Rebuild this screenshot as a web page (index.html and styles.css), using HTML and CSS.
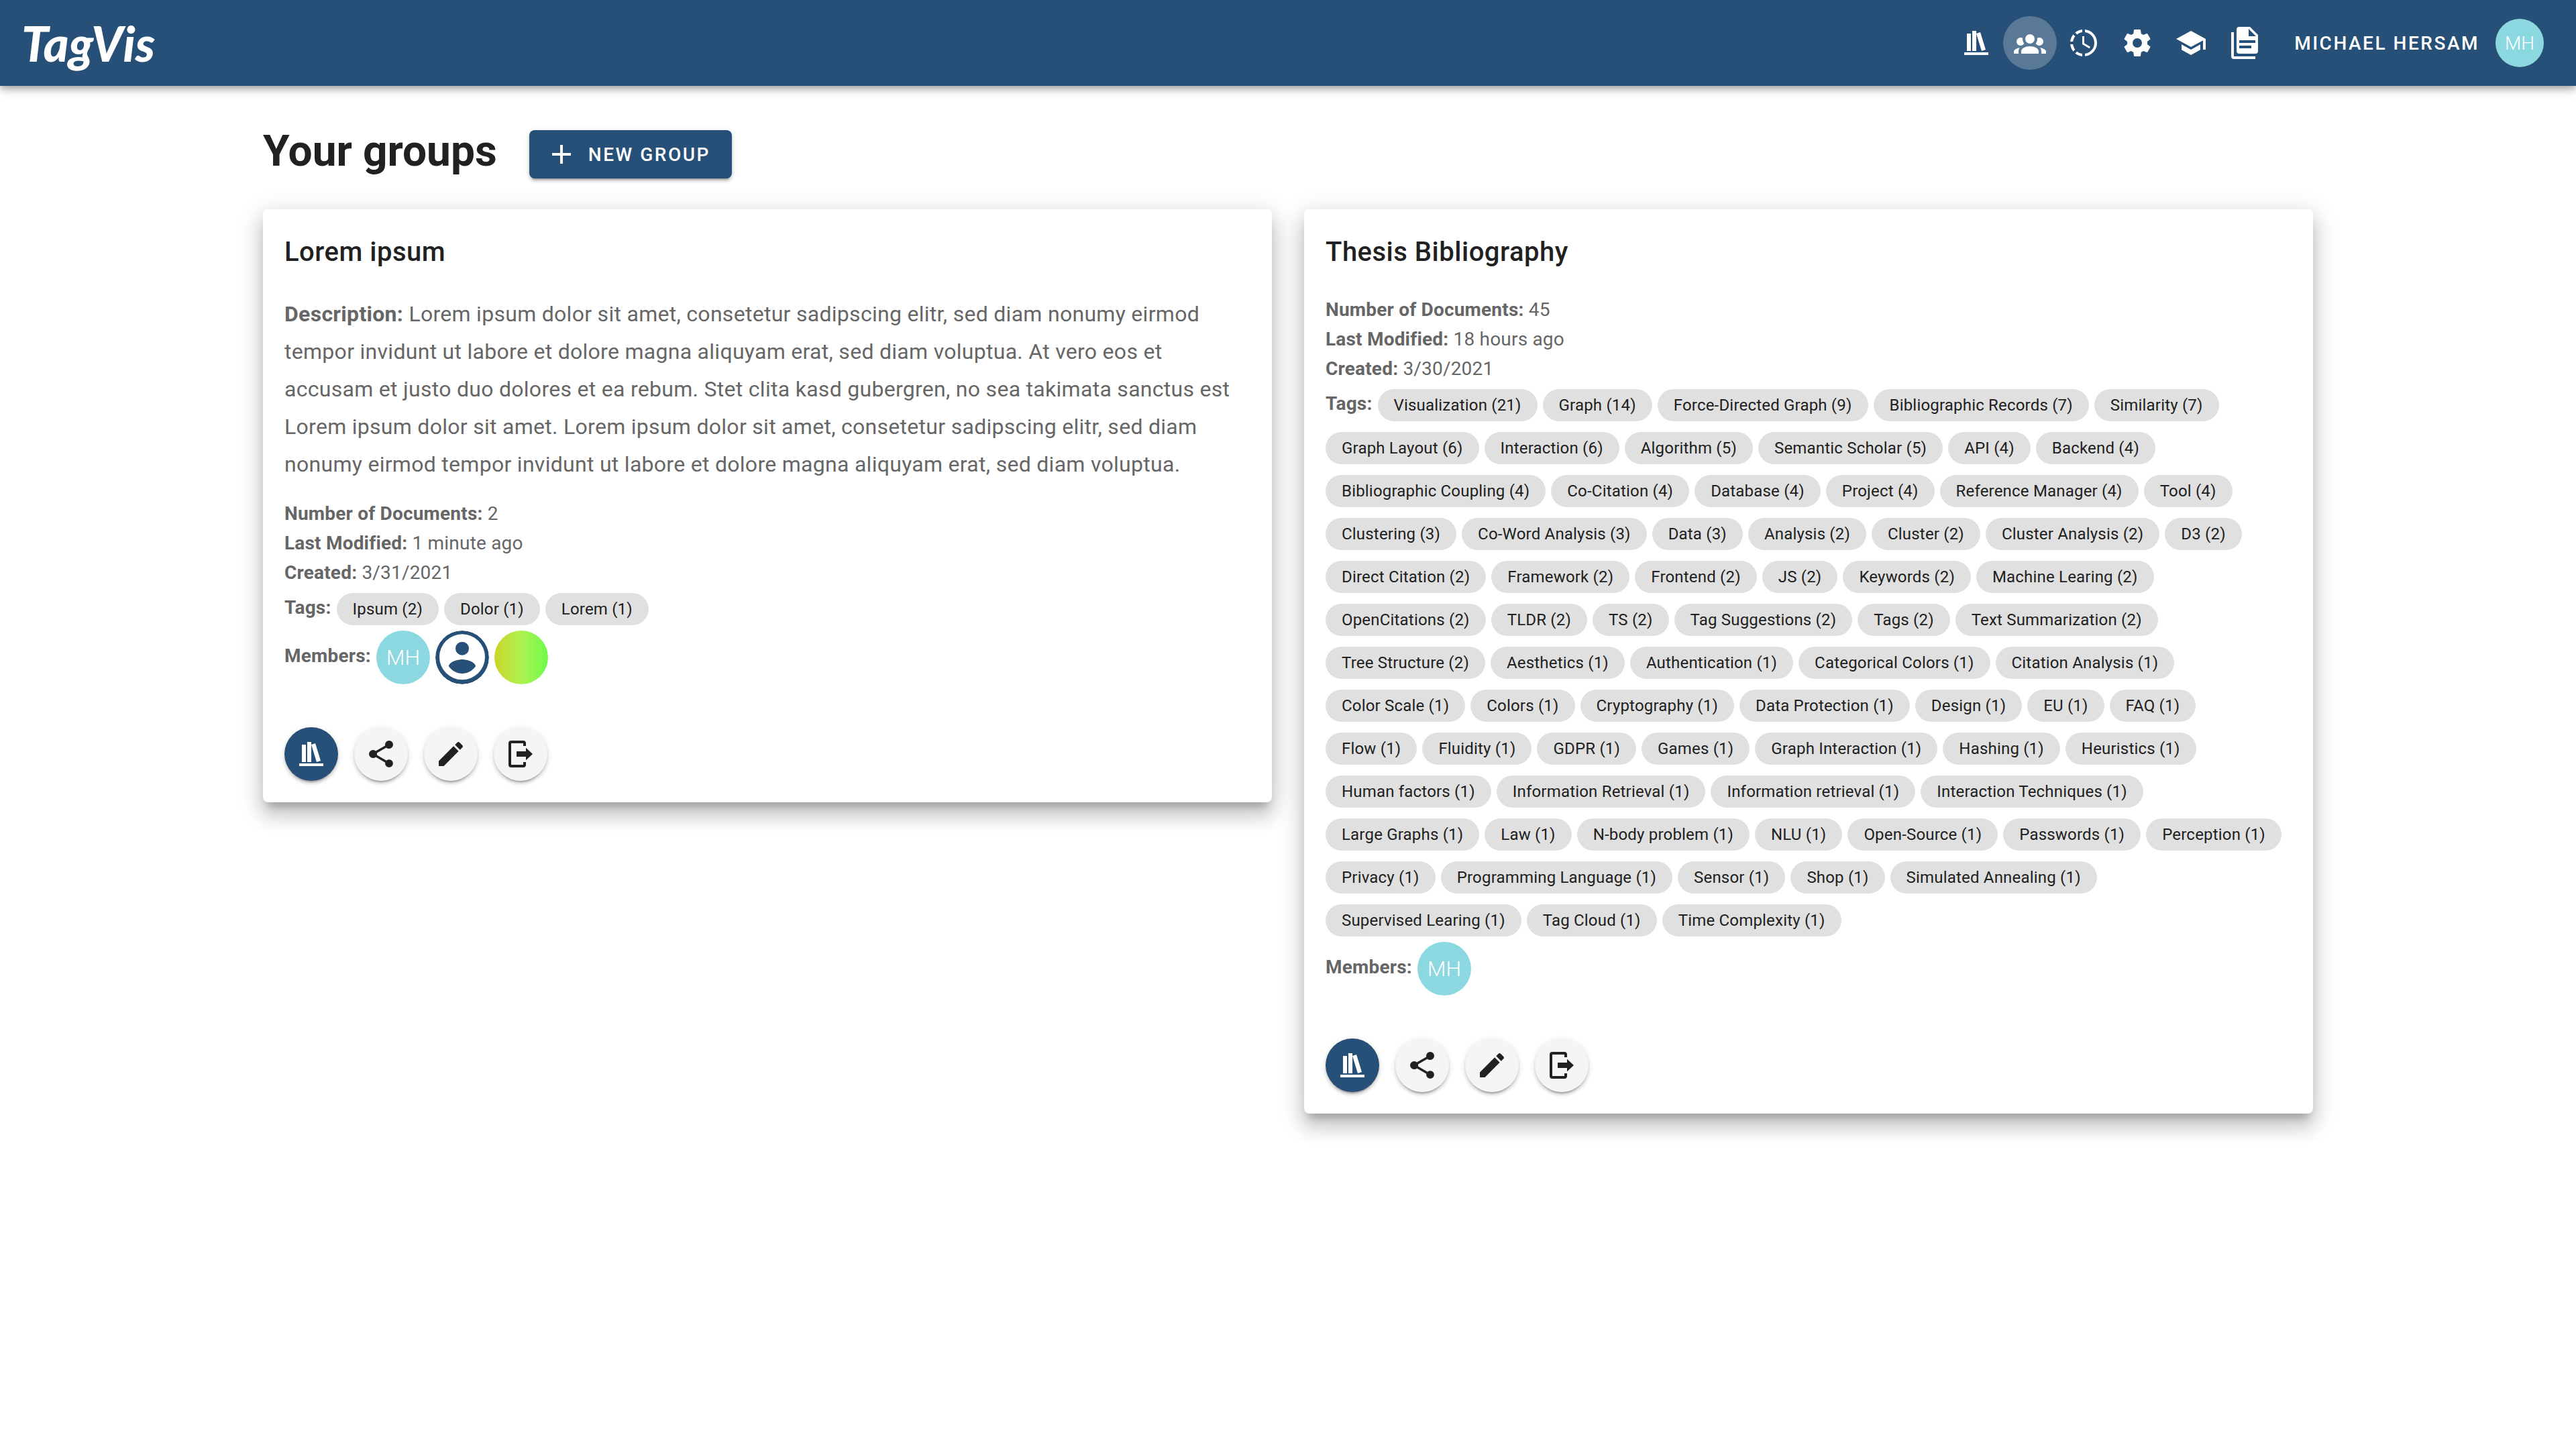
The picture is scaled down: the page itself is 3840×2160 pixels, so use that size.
FILE: index.html
```html
<!DOCTYPE html>
<html lang="en">
<head>
<meta charset="utf-8">
<title>TagVis – Your groups</title>
<meta name="viewport" content="width=device-width, initial-scale=1">
<link rel="stylesheet" href="styles.css">
</head>
<body>
<svg class="sprite" aria-hidden="true">
  <symbol id="i-books" viewBox="0 0 24 24"><path d="M9 3V18H12V3H9M12 5L16 18L19 17L15 4L12 5M5 5V18H8V5H5M3 19V21H21V19H3Z"/></symbol>
  <symbol id="i-group" viewBox="0 0 24 24"><path d="M12,5.5A3.5,3.5 0 0,1 15.5,9A3.5,3.5 0 0,1 12,12.5A3.5,3.5 0 0,1 8.5,9A3.5,3.5 0 0,1 12,5.5M5,8C5.56,8 6.08,8.15 6.53,8.42C6.38,9.85 6.8,11.27 7.66,12.38C7.16,13.34 6.16,14 5,14A3,3 0 0,1 2,11A3,3 0 0,1 5,8M19,8A3,3 0 0,1 22,11A3,3 0 0,1 19,14C17.84,14 16.84,13.34 16.34,12.38C17.2,11.27 17.62,9.85 17.47,8.42C17.92,8.15 18.44,8 19,8M5.5,18.25C5.5,16.18 8.41,14.5 12,14.5C15.59,14.5 18.5,16.18 18.5,18.25V20H5.5V18.25M0,20V18.5C0,17.11 1.89,15.94 4.45,15.6C3.86,16.28 3.5,17.22 3.5,18.25V20H0M24,20H20.5V18.25C20.5,17.22 20.14,16.28 19.55,15.6C22.11,15.94 24,17.11 24,18.5V20Z"/></symbol>
  <symbol id="i-clock" viewBox="0 0 24 24"><path d="M13,2.03V2.05L13,4.05C17.39,4.59 20.5,8.58 19.96,12.97C19.5,16.61 16.64,19.5 13,19.93V21.93C18.5,21.38 22.5,16.5 21.95,11C21.5,6.25 17.73,2.5 13,2.03M11,2.06C9.05,2.25 7.19,3 5.67,4.26L7.1,5.74C8.22,4.84 9.57,4.26 11,4.06V2.06M4.26,5.67C3,7.19 2.25,9.04 2.05,11H4.05C4.24,9.58 4.8,8.23 5.69,7.1L4.26,5.67M2.06,13C2.26,14.96 3.03,16.81 4.27,18.33L5.69,16.9C4.81,15.77 4.24,14.42 4.06,13H2.06M7.1,18.37L5.67,19.74C7.18,21 9.04,21.79 11,22V20C9.58,19.82 8.23,19.25 7.1,18.37M12.5,7V12.25L17,14.92L16.25,16.15L11,13V7H12.5Z"/></symbol>
  <symbol id="i-cog" viewBox="0 0 24 24"><path d="M12,15.5A3.5,3.5 0 0,1 8.5,12A3.5,3.5 0 0,1 12,8.5A3.5,3.5 0 0,1 15.5,12A3.5,3.5 0 0,1 12,15.5M19.43,12.97C19.47,12.65 19.5,12.33 19.5,12C19.5,11.67 19.47,11.34 19.43,11L21.54,9.37C21.73,9.22 21.78,8.95 21.66,8.73L19.66,5.27C19.54,5.05 19.27,4.96 19.05,5.05L16.56,6.05C16.04,5.66 15.5,5.32 14.87,5.07L14.5,2.42C14.46,2.18 14.25,2 14,2H10C9.75,2 9.54,2.18 9.5,2.42L9.13,5.07C8.5,5.32 7.96,5.66 7.44,6.05L4.95,5.05C4.73,4.96 4.46,5.05 4.34,5.27L2.34,8.73C2.21,8.95 2.27,9.22 2.46,9.37L4.57,11C4.53,11.34 4.5,11.67 4.5,12C4.5,12.33 4.53,12.65 4.57,12.97L2.46,14.63C2.27,14.78 2.21,15.05 2.34,15.27L4.34,18.73C4.46,18.95 4.73,19.03 4.95,18.95L7.44,17.94C7.96,18.34 8.5,18.68 9.13,18.93L9.5,21.58C9.54,21.82 9.75,22 10,22H14C14.25,22 14.46,21.82 14.5,21.58L14.87,18.93C15.5,18.67 16.04,18.34 16.56,17.94L19.05,18.95C19.27,19.03 19.54,18.95 19.66,18.73L21.66,15.27C21.78,15.05 21.73,14.78 21.54,14.63L19.43,12.97Z"/></symbol>
  <symbol id="i-school" viewBox="0 0 24 24"><path d="M12,3L1,9L12,15L21,10.09V17H23V9M5,13.18V17.18L12,21L19,17.18V13.18L12,17L5,13.18Z"/></symbol>
  <symbol id="i-docs" viewBox="0 0 24 24"><path fill-rule="evenodd" d="M16 0H8A2 2 0 0 0 6 2V18A2 2 0 0 0 8 20H20A2 2 0 0 0 22 18V6L16 0M20 12H8V10H20V12M17 16H8V14H17V16M15 7V1.5L20.5 7H15M4 4H2V22A2 2 0 0 0 4 24H20V22H4V4Z"/></symbol>
  <symbol id="i-plus" viewBox="0 0 24 24"><path d="M19,13H13V19H11V13H5V11H11V5H13V11H19V13Z"/></symbol>
  <symbol id="i-share" viewBox="0 0 24 24"><path d="M18,16.08C17.24,16.08 16.56,16.38 16.04,16.85L8.91,12.7C8.96,12.47 9,12.24 9,12C9,11.76 8.96,11.53 8.91,11.3L15.96,7.19C16.5,7.69 17.21,8 18,8A3,3 0 0,0 21,5A3,3 0 0,0 18,2A3,3 0 0,0 15,5C15,5.24 15.04,5.47 15.09,5.7L8.04,9.81C7.5,9.31 6.79,9 6,9A3,3 0 0,0 3,12A3,3 0 0,0 6,15C6.79,15 7.5,14.69 8.04,14.19L15.16,18.34C15.11,18.55 15.08,18.77 15.08,19C15.08,20.61 16.39,21.91 18,21.91C19.61,21.91 20.92,20.61 20.92,19A2.92,2.92 0 0,0 18,16.08Z"/></symbol>
  <symbol id="i-pencil" viewBox="0 0 24 24"><path d="M20.71,7.04C21.1,6.65 21.1,6 20.71,5.63L18.37,3.29C18,2.9 17.35,2.9 16.96,3.29L15.12,5.12L18.87,8.87M3,17.25V21H6.75L17.81,9.93L14.06,6.18L3,17.25Z"/></symbol>
  <symbol id="i-leave" viewBox="0 0 24 24"><path d="M16 6V4A2 2 0 0 0 14 2H5A2 2 0 0 0 3 4V20A2 2 0 0 0 5 22H14A2 2 0 0 0 16 20V18H14V20H5V4H14V6H16ZM9 10H16V7.4L21 12L16 16.6V14H9Z"/></symbol>
  <symbol id="i-person" viewBox="0 0 24 24"><path fill-rule="evenodd" d="M12 0A12 12 0 0 1 12 24A12 12 0 0 1 12 0ZM12 1.6A10.2 10.2 0 0 0 12 22A10.2 10.2 0 0 0 12 1.6ZM12 19.2C9.5 19.2 7.29 17.92 6 16C6.03 14 10 12.9 12 12.9C14 12.9 17.97 14 18 16C16.71 17.92 14.5 19.2 12 19.2ZM12 5A3 3 0 0 1 15 8A3 3 0 0 1 12 11A3 3 0 0 1 9 8A3 3 0 0 1 12 5Z"/></symbol>
</svg>

<header class="app-bar">
  <a class="brand" href="#">TagVis</a>
  <nav class="nav" aria-label="Main">
    <a class="nav-link" href="#library" aria-label="Library"><svg class="icon"><use href="#i-books"/></svg></a>
    <a class="nav-link active" href="#groups" aria-label="Groups" aria-current="page"><svg class="icon"><use href="#i-group"/></svg></a>
    <a class="nav-link" href="#history" aria-label="History"><svg class="icon"><use href="#i-clock"/></svg></a>
    <a class="nav-link" href="#settings" aria-label="Settings"><svg class="icon"><use href="#i-cog"/></svg></a>
    <a class="nav-link" href="#tutorial" aria-label="Tutorial"><svg class="icon"><use href="#i-school"/></svg></a>
    <a class="nav-link" href="#docs" aria-label="Documents"><svg class="icon"><use href="#i-docs"/></svg></a>
  </nav>
  <button class="account" type="button">MICHAEL HERSAM <span class="avatar avatar-small">MH</span></button>
</header>

<main class="page">
  <div class="page-head">
    <h1 class="page-title">Your groups</h1>
    <button class="new-group" type="button"><svg class="icon"><use href="#i-plus"/></svg>NEW GROUP</button>
  </div>

  <div class="cards">
    <article class="card">
      <h2 class="card-title">Lorem ipsum</h2>
      <p class="description"><strong>Description:</strong> Lorem ipsum dolor sit amet, consetetur sadipscing elitr, sed diam nonumy eirmod tempor invidunt ut labore et dolore magna aliquyam erat, sed diam voluptua. At vero eos et accusam et justo duo dolores et ea rebum. Stet clita kasd gubergren, no sea takimata sanctus est Lorem ipsum dolor sit amet. Lorem ipsum dolor sit amet, consetetur sadipscing elitr, sed diam nonumy eirmod tempor invidunt ut labore et dolore magna aliquyam erat, sed diam voluptua.</p>
      <p class="fact"><strong>Number of Documents:</strong> 2</p>
      <p class="fact"><strong>Last Modified:</strong> 1 minute ago</p>
      <p class="fact"><strong>Created:</strong> 3/31/2021</p>
      <div class="tags">
        <strong class="label">Tags:</strong>
        <span class="chip">Ipsum (2)</span>
        <span class="chip">Dolor (1)</span>
        <span class="chip">Lorem (1)</span>
      </div>
      <div class="members">
        <strong class="label">Members:</strong>
        <span class="avatar">MH</span>
        <svg class="avatar avatar-person" role="img" aria-label="Member"><use href="#i-person"/></svg>
        <span class="avatar avatar-lime"></span>
      </div>
      <div class="actions">
        <button class="fab primary" type="button" aria-label="Open library"><svg class="icon"><use href="#i-books"/></svg></button>
        <button class="fab" type="button" aria-label="Share"><svg class="icon"><use href="#i-share"/></svg></button>
        <button class="fab" type="button" aria-label="Edit"><svg class="icon"><use href="#i-pencil"/></svg></button>
        <button class="fab" type="button" aria-label="Leave group"><svg class="icon"><use href="#i-leave"/></svg></button>
      </div>
    </article>

    <article class="card">
      <h2 class="card-title">Thesis Bibliography</h2>
      <p class="fact"><strong>Number of Documents:</strong> 45</p>
      <p class="fact"><strong>Last Modified:</strong> 18 hours ago</p>
      <p class="fact"><strong>Created:</strong> 3/30/2021</p>
      <div class="tags">
        <strong class="label">Tags:</strong>
        <span class="chip">Visualization (21)</span>
        <span class="chip">Graph (14)</span>
        <span class="chip">Force-Directed Graph (9)</span>
        <span class="chip">Bibliographic Records (7)</span>
        <span class="chip">Similarity (7)</span>
        <span class="chip">Graph Layout (6)</span>
        <span class="chip">Interaction (6)</span>
        <span class="chip">Algorithm (5)</span>
        <span class="chip">Semantic Scholar (5)</span>
        <span class="chip">API (4)</span>
        <span class="chip">Backend (4)</span>
        <span class="chip">Bibliographic Coupling (4)</span>
        <span class="chip">Co-Citation (4)</span>
        <span class="chip">Database (4)</span>
        <span class="chip">Project (4)</span>
        <span class="chip">Reference Manager (4)</span>
        <span class="chip">Tool (4)</span>
        <span class="chip">Clustering (3)</span>
        <span class="chip">Co-Word Analysis (3)</span>
        <span class="chip">Data (3)</span>
        <span class="chip">Analysis (2)</span>
        <span class="chip">Cluster (2)</span>
        <span class="chip">Cluster Analysis (2)</span>
        <span class="chip">D3 (2)</span>
        <span class="chip">Direct Citation (2)</span>
        <span class="chip">Framework (2)</span>
        <span class="chip">Frontend (2)</span>
        <span class="chip">JS (2)</span>
        <span class="chip">Keywords (2)</span>
        <span class="chip">Machine Learing (2)</span>
        <span class="chip">OpenCitations (2)</span>
        <span class="chip">TLDR (2)</span>
        <span class="chip">TS (2)</span>
        <span class="chip">Tag Suggestions (2)</span>
        <span class="chip">Tags (2)</span>
        <span class="chip">Text Summarization (2)</span>
        <span class="chip">Tree Structure (2)</span>
        <span class="chip">Aesthetics (1)</span>
        <span class="chip">Authentication (1)</span>
        <span class="chip">Categorical Colors (1)</span>
        <span class="chip">Citation Analysis (1)</span>
        <span class="chip">Color Scale (1)</span>
        <span class="chip">Colors (1)</span>
        <span class="chip">Cryptography (1)</span>
        <span class="chip">Data Protection (1)</span>
        <span class="chip">Design (1)</span>
        <span class="chip">EU (1)</span>
        <span class="chip">FAQ (1)</span>
        <span class="chip">Flow (1)</span>
        <span class="chip">Fluidity (1)</span>
        <span class="chip">GDPR (1)</span>
        <span class="chip">Games (1)</span>
        <span class="chip">Graph Interaction (1)</span>
        <span class="chip">Hashing (1)</span>
        <span class="chip">Heuristics (1)</span>
        <span class="chip">Human factors (1)</span>
        <span class="chip">Information Retrieval (1)</span>
        <span class="chip">Information retrieval (1)</span>
        <span class="chip">Interaction Techniques (1)</span>
        <span class="chip">Large Graphs (1)</span>
        <span class="chip">Law (1)</span>
        <span class="chip">N-body problem (1)</span>
        <span class="chip">NLU (1)</span>
        <span class="chip">Open-Source (1)</span>
        <span class="chip">Passwords (1)</span>
        <span class="chip">Perception (1)</span>
        <span class="chip">Privacy (1)</span>
        <span class="chip">Programming Language (1)</span>
        <span class="chip">Sensor (1)</span>
        <span class="chip">Shop (1)</span>
        <span class="chip">Simulated Annealing (1)</span>
        <span class="chip">Supervised Learing (1)</span>
        <span class="chip">Tag Cloud (1)</span>
        <span class="chip">Time Complexity (1)</span>
      </div>
      <div class="members">
        <strong class="label">Members:</strong>
        <span class="avatar">MH</span>
      </div>
      <div class="actions">
        <button class="fab primary" type="button" aria-label="Open library"><svg class="icon"><use href="#i-books"/></svg></button>
        <button class="fab" type="button" aria-label="Share"><svg class="icon"><use href="#i-share"/></svg></button>
        <button class="fab" type="button" aria-label="Edit"><svg class="icon"><use href="#i-pencil"/></svg></button>
        <button class="fab" type="button" aria-label="Leave group"><svg class="icon"><use href="#i-leave"/></svg></button>
      </div>
    </article>
  </div>
</main>
</body>
</html>
```
FILE: styles.css
```css
:root {
  --primary: #265077;
  --text: #212121;
  --muted: #666;
}

* { box-sizing: border-box; }

body {
  margin: 0;
  background: #fff;
  color: var(--text);
  font-family: Roboto, "Liberation Sans", sans-serif;
  font-size: 28px;
}

h1, h2, p { margin: 0; }
button { border: 0; font: inherit; cursor: pointer; }

.sprite { display: none; }

.icon {
  width: 48px;
  height: 48px;
  fill: currentColor;
  flex: none;
}

/* Top bar */
.app-bar {
  display: flex;
  align-items: center;
  height: 128px;
  padding: 0 48px 0 32px;
  background: var(--primary);
  color: #fff;
  box-shadow: 0 4px 8px -2px rgba(0, 0, 0, .2), 0 8px 10px 0 rgba(0, 0, 0, .14), 0 2px 20px 0 rgba(0, 0, 0, .12);
}

.brand {
  color: #fff;
  font: italic 900 72px/80px Lato, cursive;
  text-decoration: none;
}

.nav { display: flex; margin-left: auto; }

.nav-link {
  display: flex;
  align-items: center;
  justify-content: center;
  width: 80px;
  height: 80px;
  border-radius: 50%;
  color: #fff;
}

.nav-link.active { background: rgba(255, 255, 255, .24); }

.account {
  display: flex;
  align-items: center;
  gap: 24px;
  margin-left: 34px;
  padding: 0;
  background: none;
  color: #fff;
  font-weight: 500;
  letter-spacing: .09em;
}

.avatar {
  display: flex;
  align-items: center;
  justify-content: center;
  flex: none;
  width: 80px;
  height: 80px;
  border-radius: 50%;
  background: #8cd8e1;
  color: #fff;
  font-size: 32px;
  font-weight: 300;
  letter-spacing: 0;
}

.avatar-small { width: 72px; height: 72px; font-size: 28px; }
.avatar-person { background: #fff; fill: var(--primary); }
.avatar-lime { background: linear-gradient(90deg, #ccd428, #adf24f 50%, #70fa4c); }

/* Page */
.page {
  max-width: 3120px;
  margin: 0 auto;
  padding: 54px 32px 64px;
}

.page-head {
  display: flex;
  align-items: center;
  gap: 48px;
  margin-bottom: 34px;
}

.page-title {
  padding-bottom: 8px;
  font-size: 64px;
  font-weight: 700;
  line-height: 88px;
}

.new-group {
  display: flex;
  align-items: center;
  gap: 16px;
  height: 72px;
  padding: 0 32px 0 24px;
  border-radius: 8px;
  background: var(--primary);
  color: #fff;
  font-weight: 500;
  letter-spacing: .09em;
}

.new-group, .fab {
  box-shadow: 0 6px 2px -4px rgba(0, 0, 0, .2), 0 4px 4px 0 rgba(0, 0, 0, .14), 0 2px 10px 0 rgba(0, 0, 0, .12);
}

/* Group cards */
.cards {
  display: grid;
  grid-template-columns: 1fr 1fr;
  align-items: start;
  gap: 48px;
}

.card {
  padding: 32px;
  border-radius: 8px;
  background: #fff;
  color: var(--muted);
  box-shadow: 0 12px 12px -6px rgba(0, 0, 0, .2), 0 20px 28px 2px rgba(0, 0, 0, .14), 0 8px 36px 6px rgba(0, 0, 0, .12);
}

.card-title {
  margin-bottom: 32px;
  color: var(--text);
  font-size: 40px;
  font-weight: 500;
  line-height: 64px;
  letter-spacing: .0125em;
}

.description {
  margin-bottom: 24px;
  font-size: 32px;
  line-height: 56px;
  letter-spacing: .009em;
}

.fact, .label { line-height: 44px; letter-spacing: .007em; }

.tags {
  display: flex;
  flex-wrap: wrap;
  align-items: flex-start;
  gap: 16px 8px;
  margin-top: 8px;
}

.chip {
  padding: 0 24px;
  border-radius: 24px;
  background: #e0e0e0;
  color: var(--text);
  font-size: 24px;
  line-height: 48px;
  letter-spacing: .008em;
  white-space: nowrap;
}

.members {
  display: flex;
  align-items: center;
  gap: 8px;
  margin-top: 8px;
}

.members .label { padding-bottom: 4px; }

.actions { display: flex; gap: 24px; margin-top: 64px; }

.fab {
  display: flex;
  align-items: center;
  justify-content: center;
  width: 80px;
  height: 80px;
  padding: 0;
  border-radius: 50%;
  background: #f5f5f5;
  color: var(--text);
}

.fab.primary { background: var(--primary); color: #fff; }

@media (max-width: 1800px) {
  .cards { grid-template-columns: 1fr; }
}
```
